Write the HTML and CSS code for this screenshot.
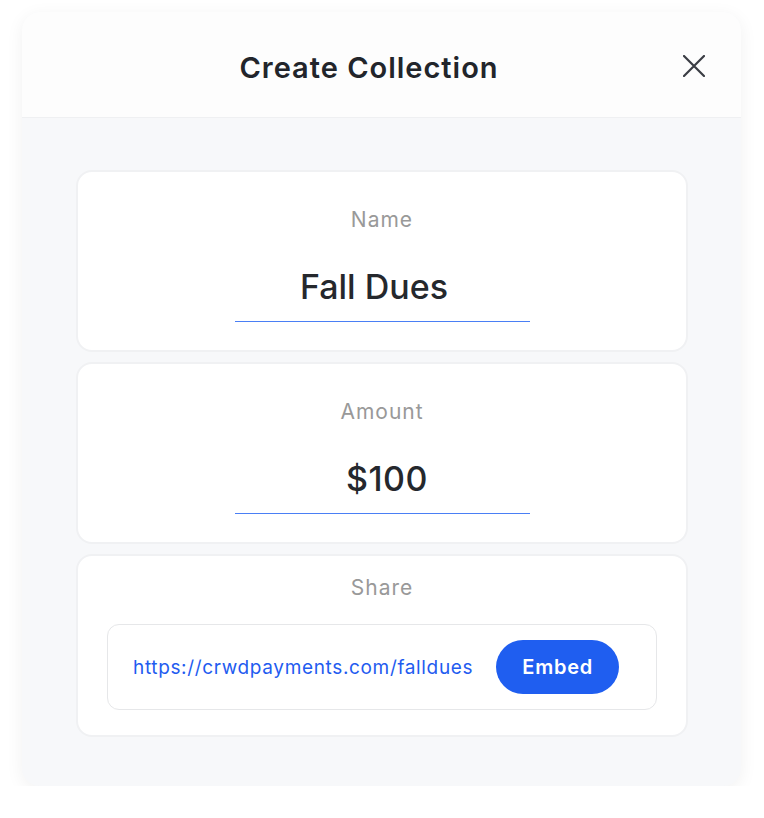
FILE: index.html
```html
<!DOCTYPE html>
<html lang="en">
<head>
    <meta charset="UTF-8">
    <meta name="viewport" content="width=device-width, initial-scale=1.0">
    <title>Create Collection</title>
    <link rel="stylesheet" href="styles.css">
</head>
<body>
    <div class="modal">
        <div class="modal-header">
            <h1 class="modal-title">Create Collection</h1>
            <button class="close-button" aria-label="Close">
                <svg width="22" height="22" viewBox="0 0 22 22" fill="none">
                    <path d="M1 1L21 21M21 1L1 21" stroke="#3a3d44" stroke-width="2.2" stroke-linecap="round"/>
                </svg>
            </button>
        </div>
        <div class="modal-body">
            <div class="card">
                <div class="card-label">Name</div>
                <input class="card-input name" type="text" value="Fall Dues">
            </div>
            <div class="card">
                <div class="card-label">Amount</div>
                <input class="card-input amount" type="text" value="$100">
            </div>
            <div class="card share">
                <div class="card-label">Share</div>
                <div class="share-box">
                    <a class="share-link" href="#">https://crwdpayments.com/falldues</a>
                    <button class="embed-button">Embed</button>
                </div>
            </div>
        </div>
    </div>
</body>
</html>
```

FILE: styles.css
```css
body {
    background-color: #fff;
    margin: 0;
    padding: 12px 23px 0 22px;
    font-family: Inter, 'Noto Sans', Arial, sans-serif;
}
.modal {
    background-color: #f7f8fa;
    border-radius: 18px;
    box-shadow: 0 4px 18px rgba(0, 0, 0, 0.06);
    overflow: hidden;
}
.modal-header {
    display: flex;
    align-items: center;
    height: 105px;
    padding: 0 36px 0 36px;
    background-color: #fdfdfd;
    border-bottom: 1px solid #eff0f2;
}
.modal-title {
    flex: 1;
    margin: 5px 3px 0 0;
    text-align: center;
    font-size: 29px;
    font-weight: 600;
    letter-spacing: 1px;
    color: #22252b;
}
.close-button {
    display: flex;
    padding: 0;
    margin-top: 2px;
    border: none;
    background: none;
    cursor: pointer;
}
.modal-body {
    display: flex;
    flex-direction: column;
    gap: 10px;
    padding: 52px 53px 49px 54px;
}
.card {
    display: flex;
    flex-direction: column;
    align-items: center;
    background-color: #fff;
    border: 2px solid #f0f1f3;
    border-radius: 16px;
    padding: 34px 0 28px;
}
.card-label {
    font-size: 21px;
    line-height: 28px;
    letter-spacing: 1px;
    color: #999;
}
.card-input {
    width: 295px;
    margin-top: 31px;
    padding: 0 0 12px;
    border: none;
    border-bottom: 1px solid #4a7ff5;
    outline: none;
    background: none;
    text-align: center;
    font-family: inherit;
    font-size: 34px;
    line-height: 44px;
    font-weight: 500;
    color: #25282d;
}
.card-input.name {
    padding-right: 16px;
    width: 279px;
}
.card-input.amount {
    padding-left: 10px;
    width: 285px;
    letter-spacing: 0.5px;
}
.card.share {
    align-items: stretch;
    padding: 18px 29px 25px;
}
.card.share .card-label {
    text-align: center;
}
.share-box {
    display: flex;
    align-items: center;
    gap: 23px;
    margin-top: 22px;
    height: 84px;
    padding: 0 25px;
    border: 1px solid #e6e7e9;
    border-radius: 12px;
}
.share-link {
    font-size: 19px;
    letter-spacing: 0.65px;
    color: #1f5cf0;
    text-decoration: none;
}
.embed-button {
    width: 123px;
    height: 54px;
    border: none;
    border-radius: 27px;
    background-color: #1f5ef0;
    color: #fff;
    font-family: inherit;
    font-size: 20px;
    font-weight: 600;
    letter-spacing: 0.8px;
    cursor: pointer;
}
```
